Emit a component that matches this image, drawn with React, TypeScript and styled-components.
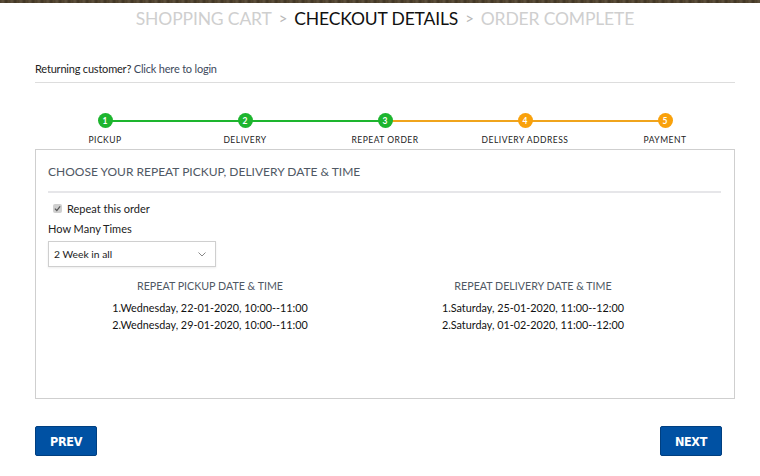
import React from "react";
import styled, { createGlobalStyle } from "styled-components";

const Global = createGlobalStyle`
  html, body { margin: 0; padding: 0; background: #fff; }
  body { font-family: Lato, "Open Sans", sans-serif; color: #222; }
  * { box-sizing: border-box; }
`;

const TopStrip = styled.div`
  height: 3px;
  background: repeating-linear-gradient(90deg, #4b3e2c 0px, #5e513d 3px, #3f3424 6px, #564831 9px);
`;

const Breadcrumb = styled.nav`
  display: flex;
  justify-content: center;
  align-items: center;
  gap: 7px;
  height: 30px;
  padding-left: 10px;
  font-size: 17.5px;
  text-transform: uppercase;
  letter-spacing: -0.15px;
`;

const Crumb = styled.span<{ $active?: boolean }>`
  color: ${(p) => (p.$active ? "#111" : "#cfcfcf")};
`;

const Sep = styled.span`
  color: #b8b8b8;
  font-size: 15px;
`;

const Page = styled.div`
  padding: 0 25px 0 35px;
`;

const Returning = styled.div`
  margin-top: 29px;
  font-size: 11px;
  color: #222;
  padding-bottom: 7px;
  border-bottom: 1px solid #ddd;
  letter-spacing: -0.2px;
`;

const LoginLink = styled.a`
  color: #3d4a5c;
  text-decoration: none;
`;

const Steps = styled.div`
  display: grid;
  grid-template-columns: repeat(5, 140px);
  margin-top: 30px;
`;

const Step = styled.div`
  position: relative;
  display: flex;
  flex-direction: column;
  align-items: center;
  gap: 7px;
`;

const Connector = styled.div<{ $color: string }>`
  position: absolute;
  top: 7px;
  left: 50%;
  width: 140px;
  height: 1.5px;
  background: ${(p) => p.$color};
`;

const Dot = styled.div<{ $color: string }>`
  position: relative;
  z-index: 1;
  width: 15px;
  height: 15px;
  border-radius: 50%;
  background: ${(p) => p.$color};
  color: #fff;
  font-size: 8.5px;
  font-weight: 700;
  display: flex;
  align-items: center;
  justify-content: center;
`;

const StepLabel = styled.div`
  font-size: 8.5px;
  letter-spacing: 0.5px;
  text-transform: uppercase;
  color: #222;
`;

const Box = styled.section`
  margin-top: 4px;
  width: 700px;
  height: 250px;
  border: 1px solid #cfcfcf;
  padding: 14px 13px 0 12px;
`;

const BoxTitle = styled.h2`
  margin: 0;
  font-weight: 400;
  font-size: 12px;
  color: #4f5864;
  text-transform: uppercase;
  padding-bottom: 12px;
  border-bottom: 2px solid #e6e6e9;
`;

const CheckRow = styled.label`
  display: flex;
  align-items: center;
  gap: 5px;
  margin: 9px 0 0 5px;
  font-size: 11px;
  color: #222;
`;

const Check = styled.span`
  width: 9px;
  height: 9px;
  background: #cfcfcf;
  border-radius: 2px;
  display: flex;
  align-items: center;
  justify-content: center;
`;

const FieldLabel = styled.div`
  margin-top: 7px;
  font-size: 11px;
  color: #222;
`;

const Select = styled.div`
  margin-top: 6px;
  width: 168px;
  height: 26px;
  border: 1px solid #cfcfcf;
  box-shadow: 0 1px 2px rgba(0, 0, 0, 0.08);
  display: flex;
  align-items: center;
  justify-content: space-between;
  padding: 0 9px 0 5px;
  font-size: 10.3px;
  color: #222;
`;

const Columns = styled.div`
  display: grid;
  grid-template-columns: 324px 322px;
  margin-top: 12px;
`;

const Column = styled.div`
  text-align: center;
`;

const ColTitle = styled.div`
  font-size: 10.7px;
  color: #4f5864;
  text-transform: uppercase;
  margin-bottom: 7px;
`;

const DateLine = styled.div`
  font-size: 10.8px;
  color: #111;
  line-height: 17px;
`;

const Buttons = styled.div`
  display: flex;
  justify-content: space-between;
  width: 687px;
  margin-top: 27px;
`;

const NavButton = styled.button`
  height: 30px;
  width: 62px;
  background: #0051a3;
  border: 1px solid #003f80;
  border-radius: 2px;
  color: #fff;
  font-family: "Liberation Sans Narrow", "DejaVu Sans Condensed", sans-serif;
  font-stretch: condensed;
  font-weight: 700;
  font-size: 12.5px;
  letter-spacing: -0.3px;
`;

const steps = [
  { n: 1, label: "Pickup", color: "#1db52e", line: "#1db52e" },
  { n: 2, label: "Delivery", color: "#1db52e", line: "#1db52e" },
  { n: 3, label: "Repeat Order", color: "#1db52e", line: "#f0a41c" },
  { n: 4, label: "Delivery Address", color: "#f9a10b", line: "#f0a41c" },
  { n: 5, label: "Payment", color: "#f9a10b", line: "" },
];

export default function App() {
  return (
    <>
      <Global />
      <TopStrip />
      <Breadcrumb>
        <Crumb>Shopping Cart</Crumb>
        <Sep>&gt;</Sep>
        <Crumb $active>Checkout Details</Crumb>
        <Sep>&gt;</Sep>
        <Crumb>Order Complete</Crumb>
      </Breadcrumb>
      <Page>
        <Returning>
          Returning customer? <LoginLink href="#">Click here to login</LoginLink>
        </Returning>
        <Steps>
          {steps.map((s) => (
            <Step key={s.n}>
              {s.line && <Connector $color={s.line} />}
              <Dot $color={s.color}>{s.n}</Dot>
              <StepLabel>{s.label}</StepLabel>
            </Step>
          ))}
        </Steps>
        <Box>
          <BoxTitle>Choose your repeat pickup, delivery date &amp; time</BoxTitle>
          <CheckRow>
            <Check>
              <svg width="7" height="7" viewBox="0 0 8 8">
                <path d="M1 4.2 L3.2 6.3 L7 1.5" stroke="#555" strokeWidth="1.4" fill="none" />
              </svg>
            </Check>
            Repeat this order
          </CheckRow>
          <FieldLabel>How Many Times</FieldLabel>
          <Select>
            <span>2 Week in all</span>
            <svg width="8" height="5" viewBox="0 0 8 5">
              <path d="M0.5 0.5 L4 4 L7.5 0.5" stroke="#888" strokeWidth="1" fill="none" />
            </svg>
          </Select>
          <Columns>
            <Column>
              <ColTitle>Repeat Pickup Date &amp; Time</ColTitle>
              <DateLine>1.Wednesday, 22-01-2020, 10:00--11:00</DateLine>
              <DateLine>2.Wednesday, 29-01-2020, 10:00--11:00</DateLine>
            </Column>
            <Column>
              <ColTitle>Repeat Delivery Date &amp; Time</ColTitle>
              <DateLine>1.Saturday, 25-01-2020, 11:00--12:00</DateLine>
              <DateLine>2.Saturday, 01-02-2020, 11:00--12:00</DateLine>
            </Column>
          </Columns>
        </Box>
        <Buttons>
          <NavButton>PREV</NavButton>
          <NavButton>NEXT</NavButton>
        </Buttons>
      </Page>
    </>
  );
}
